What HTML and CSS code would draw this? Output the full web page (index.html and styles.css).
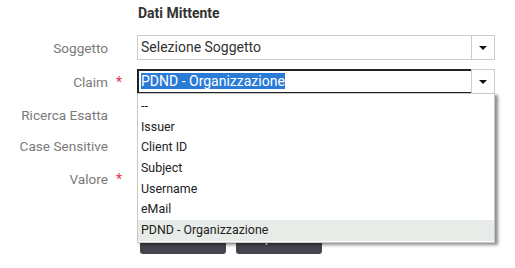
FILE: index.html
```html
<html>

<head>
  <link rel="stylesheet" href="styles.css">
</head>

<body>
  <div class="panel">
    <h4 class="title">Dati Mittente</h4>

    <div class="row">
      <label class="lbl">Soggetto</label>
      <span class="req"></span>
      <div class="select">
        <span class="value">Selezione Soggetto</span>
        <span class="arrow"></span>
      </div>
    </div>

    <div class="row">
      <label class="lbl">Claim</label>
      <span class="req">*</span>
      <div class="select focused">
        <span class="value"><span class="sel">PDND - Organizzazione</span></span>
        <span class="arrow"></span>
        <ul class="menu">
          <li>--</li>
          <li>Issuer</li>
          <li>Client ID</li>
          <li>Subject</li>
          <li>Username</li>
          <li>eMail</li>
          <li class="hover">PDND - Organizzazione</li>
        </ul>
      </div>
    </div>

    <div class="row small">
      <label class="lbl">Ricerca Esatta</label>
      <span class="req"></span>
      <div class="field"></div>
    </div>

    <div class="row small2">
      <label class="lbl">Case Sensitive</label>
      <span class="req"></span>
      <div class="field"></div>
    </div>

    <div class="row">
      <label class="lbl">Valore</label>
      <span class="req">*</span>
      <div class="field"></div>
    </div>

    <div class="buttons">
      <button class="btn">Cerca</button>
      <button class="btn">Ripulisci</button>
    </div>
  </div>
</body>

</html>
```

FILE: styles.css
```css
body {
  margin: 0;
  padding: 0;
  background: #ffffff;
  font-family: Roboto, "Noto Sans", sans-serif;
}

.panel {
  padding-top: 5px;
}

.title {
  margin: 0 0 13px 138px;
  font-size: 14px;
  font-weight: bold;
  color: #333333;
  line-height: 17px;
}

.row {
  display: flex;
  align-items: center;
  height: 25px;
  margin-bottom: 9px;
}

.row.small {
  height: 23px;
}

.row.small2 {
  height: 22px;
}

.lbl {
  width: 108px;
  text-align: right;
  font-size: 13.6px;
  color: #7a7a7a;
}

.req {
  width: 29px;
  padding-left: 8px;
  box-sizing: border-box;
  color: #e8334a;
  font-size: 14px;
}

.select {
  position: relative;
  width: 358px;
  height: 25px;
  box-sizing: border-box;
  border: 1px solid #cccccc;
  display: flex;
  align-items: center;
}

.value {
  flex: 1;
  padding-left: 3px;
  font-size: 14px;
  color: #333333;
  line-height: 23px;
  height: 23px;
}

.select.focused .value {
  border: 2px solid #222222;
  border-right: none;
  height: 25px;
  margin: -1px 0 -1px -1px;
  padding-left: 2px;
  box-sizing: border-box;
  line-height: 20px;
}

.sel {
  background: #2a7bd6;
  color: #ffffff;
}

.arrow {
  width: 22px;
  height: 23px;
  border-left: 1px solid #cccccc;
  display: flex;
  align-items: center;
  justify-content: center;
}

.arrow::after {
  content: "";
  border-left: 4px solid transparent;
  border-right: 4px solid transparent;
  border-top: 4px solid #111111;
}

.menu {
  position: absolute;
  top: 23px;
  left: -1px;
  width: 358px;
  margin: 0;
  padding: 2px 0 1px 0;
  list-style: none;
  background: #ffffff;
  border: 1px solid #c8c8c8;
  box-sizing: border-box;
  box-shadow: 3px 2px 3px rgba(0, 0, 0, 0.45);
  z-index: 10;
}

.menu li {
  height: 20.7px;
  line-height: 20.7px;
  padding-left: 3px;
  font-size: 12.4px;
  color: #222222;
}

.menu li.hover {
  background: #e8ece8;
}

.field {
  width: 358px;
}

.buttons {
  display: flex;
  gap: 10px;
  padding-left: 140px;
  margin-top: 31px;
}

.btn {
  width: 86px;
  height: 32px;
  border: none;
  border-radius: 3px;
  background: #45454d;
  color: #ffffff;
  font-family: Roboto, sans-serif;
  font-size: 14px;
  padding: 0 0 3px 0;
}
```
